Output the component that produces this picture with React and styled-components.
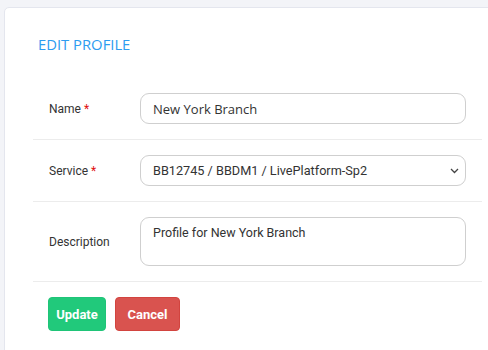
import styled, { createGlobalStyle } from 'styled-components'

const GlobalStyle = createGlobalStyle`
  html, body {
    margin: 0;
    padding: 0;
    background: #f3f4f8;
    overflow: hidden;
  }
  * { box-sizing: border-box; }
`

const Page = styled.div`
  width: 488px;
  height: 350px;
  padding: 7px 0 0 4px;
  overflow: hidden;
`

const Card = styled.div`
  width: 520px;
  height: 360px;
  background: #fff;
  border: 1px solid #e4e6ee;
  border-radius: 5px;
  padding: 26px 0 0 28px;
`

const Title = styled.h2`
  margin: 0 0 24px 5px;
  font-family: "Open Sans", sans-serif;
  font-weight: 400;
  font-size: 14.8px;
  line-height: 20px;
  color: #2d9cf0;
`

const Form = styled.form`
  width: 449px;
`

const Row = styled.div`
  display: flex;
  align-items: center;
  padding: 15px 16px;
  border-bottom: 1px solid #ececec;
`

const Label = styled.label`
  width: 91px;
  flex-shrink: 0;
  font-family: Roboto, sans-serif;
  font-size: 12px;
  color: #333;
`

const Star = styled.span`
  color: #e01010;
  margin-left: 3px;
`

const Input = styled.input`
  flex: 1;
  height: 31px;
  padding: 0 12px;
  border: 1px solid #cfcfcf;
  border-radius: 9px;
  font-family: "Open Sans", sans-serif;
  font-size: 13px;
  color: #333;
  outline: none;
`

const SelectWrap = styled.div`
  flex: 1;
  position: relative;
`

const Select = styled.select`
  width: 100%;
  height: 31px;
  padding: 0 12px;
  appearance: none;
  background: #fff;
  border: 1px solid #cfcfcf;
  border-radius: 9px;
  font-family: Roboto, sans-serif;
  font-size: 12.7px;
  color: #333;
  outline: none;
`

const Chevron = styled.svg`
  position: absolute;
  right: 7px;
  top: 13px;
  pointer-events: none;
`

const TextArea = styled.textarea`
  flex: 1;
  height: 49px;
  padding: 7px 12px;
  border: 1px solid #cfcfcf;
  border-radius: 9px;
  font-family: Roboto, sans-serif;
  font-size: 12.5px;
  color: #333;
  resize: none;
  outline: none;
`

const Actions = styled.div`
  display: flex;
  gap: 9px;
  padding: 15px 15px;
`

const Button = styled.button`
  height: 34px;
  width: ${p => p.$w}px;
  padding: 0;
  border: 1px solid ${p => (p.$variant === 'danger' ? '#d2443f' : '#1fc478')};
  border-radius: 4px;
  background: ${p => (p.$variant === 'danger' ? '#d9534f' : '#21c97b')};
  color: #fff;
  font-family: Roboto, sans-serif;
  font-weight: 700;
  font-size: 13px;
  cursor: pointer;
`

export default function App() {
  return (
    <Page>
      <GlobalStyle />
      <Card>
        <Title>EDIT PROFILE</Title>
        <Form onSubmit={e => e.preventDefault()}>
          <Row>
            <Label>Name<Star>*</Star></Label>
            <Input defaultValue="New York Branch" />
          </Row>
          <Row>
            <Label>Service<Star>*</Star></Label>
            <SelectWrap>
              <Select defaultValue="a">
                <option value="a">BB12745 / BBDM1 / LivePlatform-Sp2</option>
              </Select>
              <Chevron width="9" height="6" viewBox="0 0 9 6">
                <path d="M1 1l3.5 3.5L8 1" fill="none" stroke="#444" strokeWidth="1.3" />
              </Chevron>
            </SelectWrap>
          </Row>
          <Row>
            <Label>Description</Label>
            <TextArea defaultValue="Profile for New York Branch" />
          </Row>
          <Actions>
            <Button type="submit" $w={58}>Update</Button>
            <Button type="button" $variant="danger" $w={65}>Cancel</Button>
          </Actions>
        </Form>
      </Card>
    </Page>
  )
}
